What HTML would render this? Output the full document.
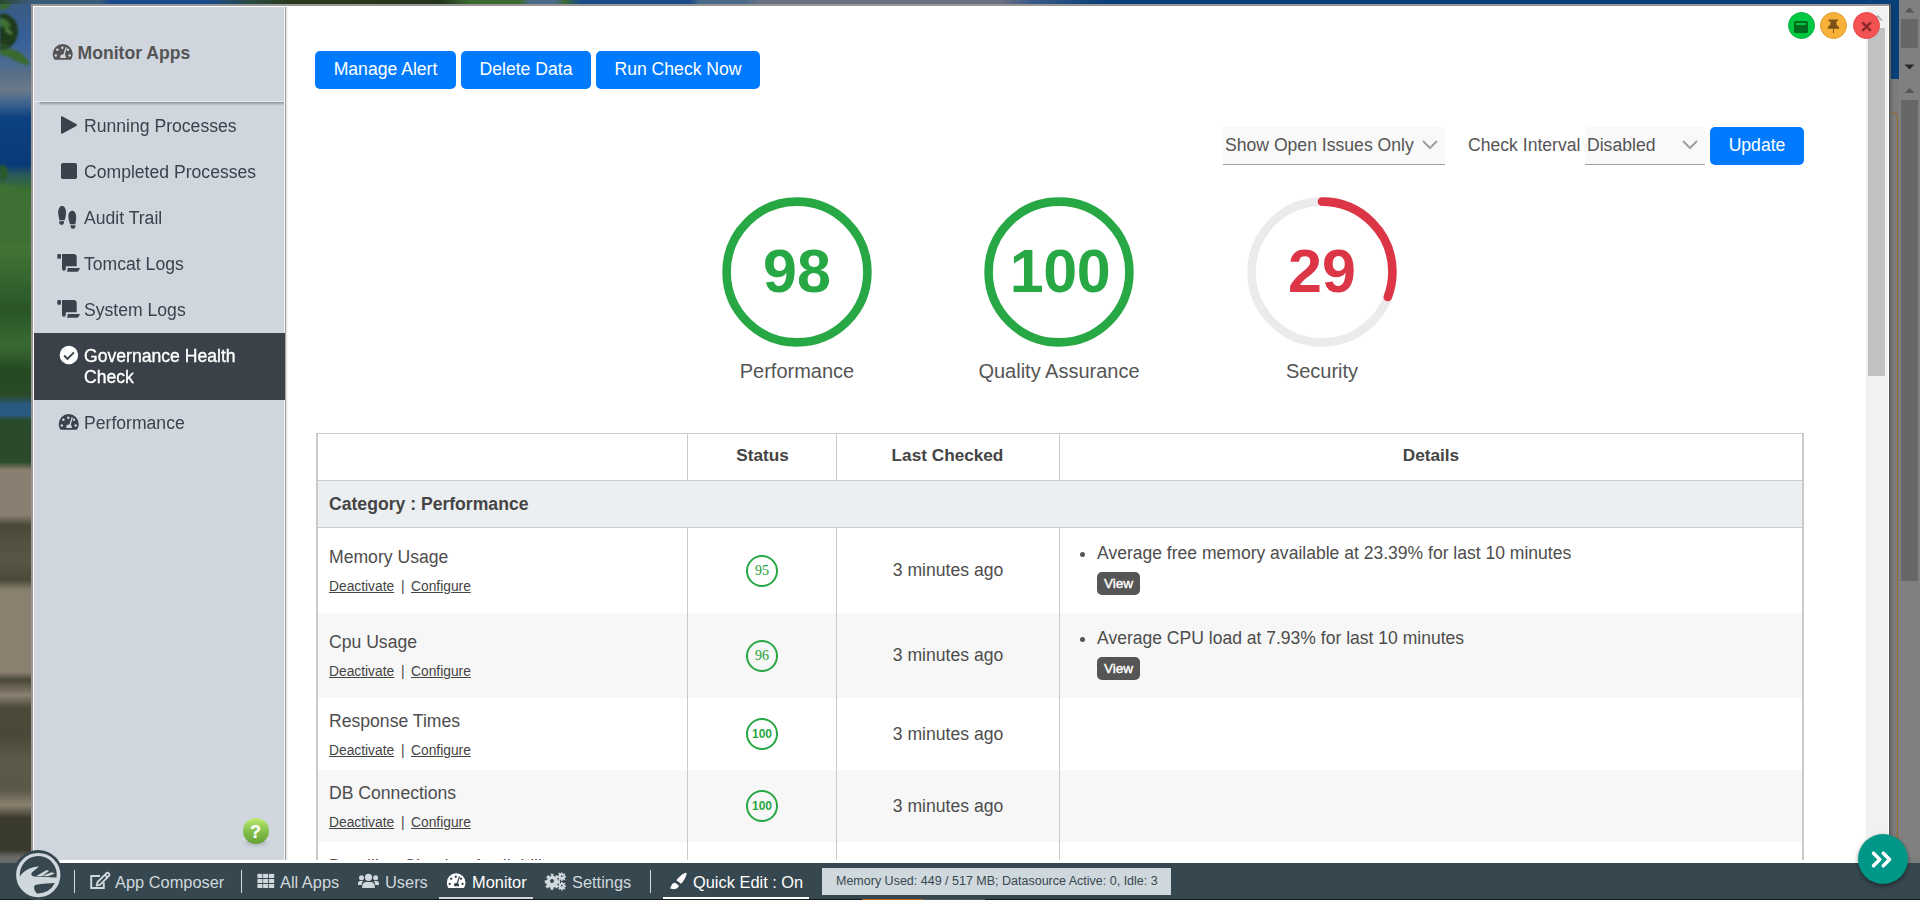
<!DOCTYPE html>
<html><head><meta charset="utf-8">
<style>
*{box-sizing:border-box;margin:0;padding:0}
html,body{width:1920px;height:900px;overflow:hidden}
body{position:relative;font-family:"Liberation Sans",sans-serif;background:#3a4a3a;-webkit-font-smoothing:antialiased}
.nav{will-change:transform}
.a{position:absolute}
.nav{position:absolute;left:84px;font-size:17.6px;color:#3a424b;line-height:22px;white-space:nowrap}
.btn{position:absolute;top:51px;height:38px;background:#007bff;color:#fff;border-radius:5px;font-size:17.6px;line-height:37px;text-align:center;white-space:nowrap}
.sel{position:absolute;top:127px;height:38px;background:#f9f9f9;border-bottom:1px solid #a0a0a0;font-size:17.6px;color:#555;line-height:36px;white-space:nowrap}
.gl{position:absolute;top:358px;font-size:20px;color:#555;line-height:26px;text-align:center;width:260px;white-space:nowrap}
.gn{position:absolute;font-weight:bold;font-size:61px;line-height:70px;text-align:center;width:200px;top:236px}
.hl{position:absolute;height:1px;background:#cacaca}
.vl{position:absolute;width:1px;background:#cacaca}
.t{position:absolute;white-space:nowrap;color:#4d4d4d}
.th{font-weight:bold;font-size:17.2px;color:#444;line-height:22px;text-align:center}
.rn{font-size:17.6px;line-height:22px}
.lnk{font-size:13.8px;line-height:18px;text-decoration:underline;color:#444}
.ago{font-size:17.6px;line-height:22px;text-align:center;width:222px}
.det{font-size:17.55px;line-height:22px}
.view{position:absolute;height:23px;width:43px;background:#555;color:#fff;border-radius:5px;font-size:13.6px;line-height:24px;text-align:center;-webkit-text-stroke:0.4px #fff}
.bul{position:absolute;width:5px;height:5px;border-radius:50%;background:#555}
.badge{position:absolute;width:32px;height:32px;border:2.4px solid #28a745;border-radius:50%;color:#28a745;text-align:center}
.tk{position:absolute;top:863.5px;font-size:16.4px;line-height:36px;color:#cfd8dc;white-space:nowrap}
.tsep{position:absolute;top:870px;width:1px;height:23px;background:#cfd8dc}
</style></head><body>
<!-- background scenery approximation -->
<div class="a" style="left:0;top:0;width:31px;height:863px;background:linear-gradient(180deg,#3a5a80 0,#35609a 40px,#4a6a90 62px,#5a7088 75px,#6a7a8a 90px,#3a6090 105px,#0c4080 118px,#0a3a78 165px,#2a5a5a 175px,#3a7030 190px,#4a7a38 230px,#3a6a30 270px,#2a5628 310px,#3a6a30 345px,#244a22 370px,#2a4a28 395px,#2a5a80 405px,#2a5a80 415px,#2a4a2c 420px,#2a4a2a 462px,#8a7e70 470px,#8a7e70 515px,#4a4a38 525px,#5a5646 560px,#4a4a38 580px,#8a8070 590px,#8a8070 672px,#4a4838 680px,#8a8070 695px,#4a4a38 708px,#4a4838 735px,#5a5a48 760px,#5a5846 790px,#8a8070 805px,#3a3a2e 818px,#3a3a2e 850px,#6a6a68 857px,#6a6a68 863px)"></div>
<svg class="a" style="left:0;top:0;filter:blur(0.8px)" width="31" height="80" viewBox="0 0 31 80"><path d="M0 0h11c1 4-2 8-6 9L0 10z" fill="#3a6a30"/><path d="M0 14c6-2 12 2 16 8 3 6 2 14-1 20-3 5-9 8-15 8z" fill="#1e3a1a"/><path d="M0 18c5 0 9 3 11 8-3 2-7 2-11 0z" fill="#3e7034"/><path d="M5 27c4 1 7 4 8 8-3 0-6-2-8-4z" fill="#4a7a3a"/><path d="M0 50c8-3 18 0 24 6 4 4 6 7 5 9-6 0-12-3-18-7-4-2-8-3-11-3z" fill="#3a6a2e"/><path d="M0 44c3-1 7 0 9 2-2 2-6 2-9 1z" fill="#2a5024"/></svg>
<svg class="a" style="left:0;top:165px;filter:blur(1px)" width="31" height="80" viewBox="0 0 31 80"><path d="M0 0c4-1 8 3 8 8s-4 8-8 8z" fill="#2a5a2a"/><path d="M0 20c8-2 18 2 24 8 3 3 5 6 7 10v42H0z" fill="#3e7034"/></svg>
<div class="a" style="left:0;top:0;width:1920px;height:4px;background:linear-gradient(90deg,#2a4a2a 0,#3a5a7a 30px,#3a5a7a 100px,#1a4a8a 110px,#1a4a8a 210px,#2a4a40 250px,#2a3a1e 290px,#22341a 440px,#3a6a30 470px,#3a6a30 520px,#4a6a88 530px,#4a6a88 555px,#3a6a30 565px,#1a4a8a 580px,#1a4a8a 690px,#4a6a8a 700px,#4a6a8a 745px,#6a7080 760px,#6a7080 1000px,#3a5a88 1030px,#0a4078 1100px,#0a4078 1920px)"></div>
<!-- right outer area -->
<div class="a" style="left:1889px;top:0;width:31px;height:863px;background:#7c7c7c"></div><div class="a" style="left:1880px;top:0;width:19px;height:4px;background:#0a4078"></div>
<div class="a" style="left:1891px;top:0;width:8px;height:79px;background:#0a4078"></div>
<div class="a" style="left:1899px;top:0;width:21px;height:857px;background:#808080"></div>
<div class="a" style="left:1901px;top:19px;width:17px;height:29px;background:#676767"></div>
<div class="a" style="left:1901px;top:100px;width:17px;height:481px;background:#676767"></div>
<div class="a" style="left:1897px;top:118px;width:1px;height:732px;background:#9a6a2a"></div>
<div class="a" style="left:1891px;top:112px;width:7px;height:7px;border-top:1px solid #9a6a2a;border-right:1px solid #9a6a2a;border-top-right-radius:6px"></div>
<svg class="a" style="left:1899px;top:0" width="21" height="100" viewBox="0 0 21 100"><path d="M5.5 12.5l5-5 5 5z" fill="#555"/><path d="M5.5 64.5h10l-5 5z" fill="#2a2a2a"/><path d="M5.5 93l5-5 5 5z" fill="#555"/></svg>
<!-- modal frame -->
<div class="a" style="left:1889px;top:4px;width:5px;height:859px;background:linear-gradient(90deg,rgba(0,0,0,.32),rgba(0,0,0,.12) 40%,rgba(0,0,0,0))"></div>
<div class="a" style="left:31px;top:4px;width:1858px;height:859px;background:#9a9896"></div>
<div class="a" style="left:33px;top:6px;width:1856px;height:857px;background:#fff"></div>
<!-- inner scrollbar -->
<div class="a" style="left:1866px;top:7px;width:22px;height:856px;background:#f1f1f1"></div>
<div class="a" style="left:1868px;top:28px;width:17px;height:348px;background:#c1c1c1"></div>
<svg class="a" style="left:1866px;top:7px" width="22" height="20" viewBox="0 0 22 20"><path d="M7 13.5l4.5-4.5 4.5 4.5" fill="none" stroke="#a3a3a3" stroke-width="1.4"/></svg>

<!-- sidebar -->
<div class="a" style="left:34px;top:7px;width:251px;height:853px;background:#cfd6de"></div>
<div class="a" style="left:284px;top:7px;width:1px;height:853px;background:#eceff2"></div>
<div class="a" style="left:285px;top:7px;width:1px;height:853px;background:#a6a6a6"></div>
<div class="a" style="left:286px;top:7px;width:2px;height:853px;background:linear-gradient(90deg,#dcdcdc,#fff)"></div>
<div class="a" style="left:34px;top:101px;width:250px;height:1px;background:#e9ebed"></div>
<div class="a" style="left:38px;top:102px;width:246px;height:4px;background:linear-gradient(180deg,#8d949b,#a9b0b7 40%,#c6cdd5 75%,#cfd6de);-webkit-mask-image:linear-gradient(90deg,transparent,#000 3px)"></div>

<svg width="0" height="0" style="position:absolute"><defs>
<symbol id="tach" viewBox="0 0 22 18"><path d="M10.7 1A10 10 0 0 0 0.7 11c0 2.1.7 4.1 1.8 5.8h16.4c1.1-1.7 1.8-3.7 1.8-5.8A10 10 0 0 0 10.7 1z" fill="var(--f)"/><g fill="var(--b)"><circle cx="10.3" cy="4.7" r="1.25"/><circle cx="5.4" cy="6.8" r="1.25"/><circle cx="15.9" cy="6.8" r="1.25"/><circle cx="3.8" cy="12.4" r="1.25"/><circle cx="17.6" cy="12.4" r="1.25"/><path d="M13.7 3.9l1.1.4-2 7.4c.6.4 1 1 1 1.8V15H8.3v-1.5c0-1.2 1-2.1 2.2-2.1h.8z"/></g></symbol>
<symbol id="scroll" viewBox="0 0 30 24"><rect x="5.3" y="4" width="3.7" height="4.8" rx="1"/><path d="M10 4h11.7a3 3 0 0 1 3 3v9.3H13.8v2.5a1.9 1.9 0 0 1-3.8 0z"/><path d="M15.6 18H28l-1.2 2.6c-.3.7-.8 1.2-1.6 1.2H14.6c.7-.6 1-1.6 1-2.6z"/></symbol>
</defs></svg>

<svg class="a" style="left:52px;top:43px;--f:#555;--b:#cfd6de" width="22" height="18"><use href="#tach"/></svg>
<div class="a" style="left:77.5px;top:42px;font-size:17.6px;font-weight:bold;color:#555;line-height:22px;white-space:nowrap">Monitor Apps</div>

<svg class="a" style="left:61px;top:116px" width="16" height="18" viewBox="0 0 16 18"><path fill="#3a424b" d="M1.6 0.4 15.3 8.1a1 1 0 0 1 0 1.8L1.6 17.6A1 1 0 0 1 0 16.8V1.2A1 1 0 0 1 1.6 0.4z"/></svg>
<div class="nav" style="top:115px">Running Processes</div>
<svg class="a" style="left:61px;top:163px" width="16" height="16" viewBox="0 0 16 16"><rect width="16" height="16" rx="1.8" fill="#3a424b"/></svg>
<div class="nav" style="top:161px">Completed Processes</div>
<svg class="a" style="left:52px;top:202px" width="30" height="30" viewBox="0 0 30 30"><g fill="#3a424b"><path d="M10.1 4C7.9 4 6.2 6.5 6.2 10.5c0 3 .9 5.5 1.2 7.8h5.3c.6-2.3 1.3-4.8 1.3-7.8C14 6.5 12.3 4 10.1 4z"/><path d="M7.2 19.2h4.8v1.3a2.4 2.4 0 0 1-4.8 0z"/><path d="M20.3 8.8c-2.2 0-3.9 2.3-3.9 5.6 0 3 1.1 5.5 1.6 7.8h5.3c.6-2.3.9-4.5.9-7.1 0-3.7-1.7-6.3-3.9-6.3z"/><path d="M18.6 23.3h4.8v1.1a2.4 2.4 0 0 1-4.8 0z"/></g></svg>
<div class="nav" style="top:207px">Audit Trail</div>
<svg class="a" style="left:52px;top:250px;fill:#3a424b" width="30" height="24"><use href="#scroll"/></svg>
<div class="nav" style="top:253px">Tomcat Logs</div>
<svg class="a" style="left:52px;top:296px;fill:#3a424b" width="30" height="24"><use href="#scroll"/></svg>
<div class="nav" style="top:299px">System Logs</div>
<div class="a" style="left:34px;top:333px;width:251px;height:67px;background:#3a4148"></div>
<svg class="a" style="left:59px;top:345px" width="20" height="20" viewBox="0 0 20 20"><circle cx="9.9" cy="10" r="9.25" fill="#fff"/><path d="M5.2 10.5l3.3 3.3 6.4-6.4" fill="none" stroke="#3a4148" stroke-width="1.9"/></svg>
<div class="nav" style="top:346px;color:#fff;line-height:21px;-webkit-text-stroke:0.35px #fff">Governance Health<br>Check</div>
<svg class="a" style="left:58px;top:413px;--f:#3a424b;--b:#cfd6de" width="22" height="18"><use href="#tach"/></svg>
<div class="nav" style="top:412px">Performance</div>
<!-- help -->
<div class="a" style="left:245px;top:840px;width:22px;height:6px;border-radius:50%;background:rgba(0,0,0,.12);filter:blur(1px)"></div>
<div class="a" style="left:242.5px;top:817.5px;width:26px;height:26px;border-radius:50%;background:linear-gradient(180deg,#bdee72 0,#94cc56 35%,#78b444 70%,#64a034 100%);color:#fff;font-weight:bold;font-size:18px;line-height:28px;text-align:center;-webkit-text-stroke:0.2px #fff">?</div>
<!-- buttons -->
<div class="btn" style="left:315px;width:141px">Manage Alert</div>
<div class="btn" style="left:461px;width:130px">Delete Data</div>
<div class="btn" style="left:596px;width:164px">Run Check Now</div>
<!-- filters -->
<div class="sel" style="left:1223px;width:222px;padding-left:2px">Show Open Issues Only</div>
<svg class="a" style="left:1421px;top:139px" width="18" height="12" viewBox="0 0 18 12"><path d="M2 2l7 7 7-7" fill="none" stroke="#a0a0a0" stroke-width="2"/></svg>
<div class="t" style="left:1468px;top:134px;font-size:17.6px;line-height:22px;color:#555">Check Interval</div>
<div class="sel" style="left:1585px;width:120px;padding-left:2px">Disabled</div>
<svg class="a" style="left:1681px;top:139px" width="18" height="12" viewBox="0 0 18 12"><path d="M2 2l7 7 7-7" fill="none" stroke="#a0a0a0" stroke-width="2"/></svg>
<div class="btn" style="left:1710px;top:127px;width:94px;height:38px;line-height:37px">Update</div>
<!-- gauges -->
<svg class="a" style="left:717px;top:192px" width="160" height="160" viewBox="0 0 160 160"><circle cx="80" cy="80" r="70.4" fill="none" stroke="#28a745" stroke-width="8.6"/></svg>
<div class="gn" style="left:697px;color:#28a745">98</div>
<div class="gl" style="left:667px">Performance</div>
<svg class="a" style="left:979px;top:192px" width="160" height="160" viewBox="0 0 160 160"><circle cx="80" cy="80" r="70.4" fill="none" stroke="#28a745" stroke-width="8.6"/></svg>
<div class="gn" style="left:960px;color:#28a745;letter-spacing:-0.5px">100</div>
<div class="gl" style="left:929px">Quality Assurance</div>
<svg class="a" style="left:1242px;top:192px" width="160" height="160" viewBox="0 0 160 160"><circle cx="80" cy="80" r="70.4" fill="none" stroke="#ebebeb" stroke-width="8.6"/><circle cx="80" cy="80" r="70.4" fill="none" stroke="#dc3545" stroke-width="8.6" stroke-linecap="round" stroke-dasharray="136 500" transform="rotate(-90 80 80)"/></svg>
<div class="gn" style="left:1222px;color:#dc3545">29</div>
<div class="gl" style="left:1192px">Security</div>
<!-- table -->
<div class="a" style="left:316px;top:433px;width:1488px;height:430px;background:#fff"></div>
<div class="a" style="left:318px;top:481px;width:1484px;height:46px;background:#eceff1"></div>
<div class="a" style="left:318px;top:613px;width:1484px;height:85px;background:#f7f7f7"></div>
<div class="a" style="left:318px;top:770px;width:1484px;height:72px;background:#f7f7f7"></div>
<div class="hl" style="left:316px;top:433px;width:1488px"></div>
<div class="vl" style="left:316px;top:433px;height:430px;width:2px"></div>
<div class="vl" style="left:1802px;top:433px;height:430px;width:2px"></div>
<div class="hl" style="left:316px;top:480px;width:1488px"></div>
<div class="hl" style="left:316px;top:527px;width:1488px"></div>
<div class="vl" style="left:687px;top:433px;height:47px"></div>
<div class="vl" style="left:836px;top:433px;height:47px"></div>
<div class="vl" style="left:1059px;top:433px;height:47px"></div>
<div class="vl" style="left:687px;top:527px;height:336px"></div>
<div class="vl" style="left:836px;top:527px;height:336px"></div>
<div class="vl" style="left:1059px;top:527px;height:336px"></div>
<div class="t th" style="left:688px;top:444px;width:149px">Status</div>
<div class="t th" style="left:836px;top:444px;width:223px">Last Checked</div>
<div class="t th" style="left:1059px;top:444px;width:744px">Details</div>
<div class="t" style="left:329px;top:493px;font-weight:bold;font-size:17.6px;line-height:22px;color:#444">Category : Performance</div>

<div class="t rn" style="left:329px;top:546px">Memory Usage</div>
<div class="t lnk" style="left:329px;top:578px">Deactivate</div><div class="t" style="left:401px;top:578px;font-size:13.8px;line-height:18px;color:#444">|</div><div class="t lnk" style="left:411px;top:578px">Configure</div>
<div class="badge" style="left:746px;top:555px;font-family:'Liberation Serif',serif;font-size:14px;line-height:28px;-webkit-text-stroke:0.12px #28a745">95</div>
<div class="t ago" style="left:837px;top:559px">3 minutes ago</div>
<div class="bul" style="left:1080px;top:552px"></div>
<div class="t det" style="left:1097px;top:542px">Average free memory available at 23.39% for last 10 minutes</div>
<div class="view" style="left:1097px;top:572px">View</div>

<div class="t rn" style="left:329px;top:631px">Cpu Usage</div>
<div class="t lnk" style="left:329px;top:663px">Deactivate</div><div class="t" style="left:401px;top:663px;font-size:13.8px;line-height:18px;color:#444">|</div><div class="t lnk" style="left:411px;top:663px">Configure</div>
<div class="badge" style="left:746px;top:640px;font-family:'Liberation Serif',serif;font-size:14px;line-height:28px;-webkit-text-stroke:0.12px #28a745">96</div>
<div class="t ago" style="left:837px;top:644px">3 minutes ago</div>
<div class="bul" style="left:1080px;top:637px"></div>
<div class="t det" style="left:1097px;top:627px">Average CPU load at 7.93% for last 10 minutes</div>
<div class="view" style="left:1097px;top:657px">View</div>

<div class="t rn" style="left:329px;top:710px">Response Times</div>
<div class="t lnk" style="left:329px;top:742px">Deactivate</div><div class="t" style="left:401px;top:742px;font-size:13.8px;line-height:18px;color:#444">|</div><div class="t lnk" style="left:411px;top:742px">Configure</div>
<div class="badge" style="left:746px;top:718px;font-size:12px;font-weight:bold;line-height:28px">100</div>
<div class="t ago" style="left:837px;top:723px">3 minutes ago</div>

<div class="t rn" style="left:329px;top:782px">DB Connections</div>
<div class="t lnk" style="left:329px;top:814px">Deactivate</div><div class="t" style="left:401px;top:814px;font-size:13.8px;line-height:18px;color:#444">|</div><div class="t lnk" style="left:411px;top:814px">Configure</div>
<div class="badge" style="left:746px;top:790px;font-size:12px;font-weight:bold;line-height:28px">100</div>
<div class="t ago" style="left:837px;top:795px">3 minutes ago</div>
<div class="t rn" style="left:329px;top:855px">Deadline Checker Availability</div>
<div class="a" style="left:316px;top:860px;width:1550px;height:3px;background:#fff"></div>
<!-- taskbar -->
<div class="a" style="left:0;top:863px;width:1920px;height:36px;background:#37474f"></div>
<div class="a" style="left:0;top:899px;width:1920px;height:1px;background:linear-gradient(90deg,#1a1a1a 0,#1a1a1a 862px,#b86a20 862px,#b86a20 923px,#5a5a5a 923px,#5a5a5a 985px,#1a1a1a 985px)"></div>
<!-- logo -->
<svg class="a" style="left:0;top:840px" width="70" height="60" viewBox="0 840 70 60">
<circle cx="38.25" cy="875.1" r="25" fill="#37474f"/>
<circle cx="38.25" cy="875.1" r="20" fill="#cfd8dc"/>
<circle cx="38.25" cy="875.1" r="20.3" fill="none" stroke="#cfd8dc" stroke-width="3.7"/>
<path fill="#37474f" d="M19.9 876.8C22 872 30 866.5 38.7 866.4C38.5 867.6 34 870 31.6 873C30.6 874.5 31.6 876 34 876.4L56.55 877.4A18.5 18.5 0 1 0 19.9 876.8z"/>
<path fill="#cfd8dc" d="M36.3 875.9L46.7 870.1L49.1 871L41.8 876.2zM42.4 875.9L51.6 872.2L54.9 873.4L47.9 876.2z"/>
<path fill="#37474f" d="M36.3 884.7C42 883.8 50 883.4 54.9 883.1A18.5 18.5 0 0 1 36.9 893.5C35 891.5 34 889.2 34.1 887.2C34.2 885.8 35 885 36.3 884.7z"/>
</svg>
<div class="tsep" style="left:74px"></div>
<svg class="a" style="left:85px;top:866px" width="30" height="30" viewBox="0 0 30 30"><g fill="none" stroke="#cfd8dc" stroke-width="1.9"><path d="M15 10H6.2v12h12.6v-5.5"/><path d="M11.6 19.6l1-3.6 8.7-8.7a1.6 1.6 0 0 1 2.3 0l.3.3a1.6 1.6 0 0 1 0 2.3l-8.7 8.7z" stroke-linejoin="round"/><path d="M19.9 8.8l2.4 2.4"/></g></svg>
<div class="tk" style="left:115px">App Composer</div>
<div class="tsep" style="left:241px"></div>
<svg class="a" style="left:252px;top:866px" width="30" height="30" viewBox="0 0 30 30"><g fill="#cfd8dc"><rect x="5.4" y="7.9" width="5" height="4.1"/><rect x="11.1" y="7.9" width="5" height="4.1"/><rect x="16.9" y="7.9" width="5.3" height="4.1"/><rect x="5.4" y="13" width="5" height="4"/><rect x="11.1" y="13" width="5" height="4"/><rect x="16.9" y="13" width="5.3" height="4"/><rect x="5.4" y="18" width="5" height="4"/><rect x="11.1" y="18" width="5" height="4"/><rect x="16.9" y="18" width="5.3" height="4"/></g></svg>
<div class="tk" style="left:280px">All Apps</div>
<svg class="a" style="left:354px;top:866px" width="30" height="30" viewBox="0 0 30 30"><g fill="#cfd8dc"><circle cx="14.5" cy="11.3" r="3.6"/><circle cx="7.5" cy="11.8" r="2.5"/><circle cx="21.6" cy="11.8" r="2.5"/><path d="M4 19v-1.8c0-1.2.9-2.2 2.1-2.2h3.2c-.9.8-1.5 2-1.6 4z"/><path d="M25 19v-1.8c0-1.2-.9-2.2-2.1-2.2h-3.2c.9.8 1.5 2 1.6 4z"/><path d="M8.2 22v-2c0-2.2 1.8-4 4-4h4.6c2.2 0 4 1.8 4 4v2z"/></g></svg>
<div class="tk" style="left:385px">Users</div>
<svg class="a" style="left:442px;top:866px;--f:#fff;--b:#37474f" width="30" height="30" viewBox="-4.2 -6.4 30 30"><use href="#tach" width="22" height="18" x="0" y="0" transform="scale(0.93)"/></svg>
<div class="tk" style="left:472px;color:#fff">Monitor</div>
<div class="a" style="left:439px;top:897px;width:94px;height:2px;background:#cfd8dc"></div>
<svg class="a" style="left:540px;top:866px" width="30" height="30" viewBox="0 0 30 30"><g fill="#cfd8dc" fill-rule="evenodd"><path d="M10.5 7.8h3v2.1l1.6.7 1.5-1.5 2.1 2.1-1.5 1.5.7 1.6h2.1v3h-2.1l-.7 1.6 1.5 1.5-2.1 2.1-1.5-1.5-1.6.7v2.1h-3v-2.1l-1.6-.7-1.5 1.5-2.1-2.1 1.5-1.5-.7-1.6H4.8v-3h2.1l.7-1.6-1.5-1.5 2.1-2.1 1.5 1.5 1.6-.7zM12 13a2 2 0 1 0 0 4 2 2 0 1 0 0-4z"/><path d="M21 6.5h1.6v1.2l.8.4.9-.9 1.1 1.1-.9.9.4.8h1.2v1.6h-1.2l-.4.8.9.9-1.1 1.1-.9-.9-.8.4v1.2H21v-1.2l-.8-.4-.9.9-1.1-1.1.9-.9-.4-.8h-1.2V9.4h1.2l.4-.8-.9-.9 1.1-1.1.9.9.8-.4zM21.8 9.3a.9.9 0 1 0 0 1.8.9.9 0 1 0 0-1.8z"/><path d="M21 15.9h1.6v1.2l.8.4.9-.9 1.1 1.1-.9.9.4.8h1.2V21h-1.2l-.4.8.9.9-1.1 1.1-.9-.9-.8.4v1.2H21v-1.2l-.8-.4-.9.9-1.1-1.1.9-.9-.4-.8h-1.2v-1.6h1.2l.4-.8-.9-.9 1.1-1.1.9.9.8-.4zM21.8 18.8a.9.9 0 1 0 0 1.8.9.9 0 1 0 0-1.8z"/></g></svg>
<div class="tk" style="left:572px">Settings</div>
<div class="tsep" style="left:650px"></div>
<svg class="a" style="left:662px;top:866px" width="30" height="30" viewBox="0 0 30 30"><g fill="#fff"><path d="M23 6.9c1-.3 1.8.5 1.5 1.5-1.1 3.7-3.3 7.3-5.5 9.3l-4.6-3.5C16.2 11.9 19.5 8.2 23 6.9z"/><path d="M13.2 16.7L16.9 19.6C16.5 21.9 14.6 23.2 12 23.2C10.3 23.2 8.6 22.8 7.6 22.1C8.8 21.6 9.1 20.7 9.4 19.5C9.9 17.8 11.3 16.8 13.2 16.7z"/></g></svg>
<div class="tk" style="left:693px;color:#fff">Quick Edit : On</div>
<div class="a" style="left:663px;top:897px;width:146px;height:2px;background:#fff"></div>
<div class="a" style="left:822px;top:868px;width:349px;height:27px;background:#cfd8dc;color:#37474f;font-size:12.5px;line-height:26px;padding-left:14px;white-space:nowrap">Memory Used: 449 / 517 MB; Datasource Active: 0, Idle: 3</div>
<!-- fab -->
<div class="a" style="left:1858px;top:834px;width:50px;height:50px;border-radius:50%;background:#009688;box-shadow:0 2px 4px rgba(0,0,0,.45)"></div>
<svg class="a" style="left:1868px;top:846px" width="30" height="30" viewBox="0 0 30 30"><path d="M5.5 7.2l6.3 6.3-6.3 6.3M15.3 7.2l6.3 6.3-6.3 6.3" fill="none" stroke="#fff" stroke-width="3.5" stroke-linecap="round" stroke-linejoin="round"/></svg>
<!-- window controls -->
<div class="a" style="left:1788px;top:12px;width:27px;height:27px;border-radius:50%;background:#00c941;border:1px solid #08b040"></div>
<div class="a" style="left:1794px;top:21px;width:14px;height:12px;border-radius:1.5px;background:#006a1d"></div>
<div class="a" style="left:1796px;top:23px;width:10px;height:2px;background:#00c941"></div>
<div class="a" style="left:1820px;top:12px;width:27px;height:27px;border-radius:50%;background:#f7b139;border:1px solid #dca030"></div>
<svg class="a" style="left:1826px;top:19px" width="15" height="15" viewBox="0 0 15 15"><path fill="#7a5218" d="M2.5 0.5h9.5v1.8h-1.6v3.2l2.7 2.7v1.5H7.9v4.5H7V9.7H1.8V8.2L4.4 5.5V2.3H2.5z"/></svg>
<div class="a" style="left:1853px;top:12px;width:27px;height:27px;border-radius:50%;background:#f55353;border:1px solid #e64545"></div>
<svg class="a" style="left:1859px;top:19px" width="15" height="15" viewBox="0 0 15 15"><path d="M3.3 3.3l8.6 8.6M11.9 3.3l-8.6 8.6" stroke="#8a2a2a" stroke-width="2.4"/></svg>


</body></html>
